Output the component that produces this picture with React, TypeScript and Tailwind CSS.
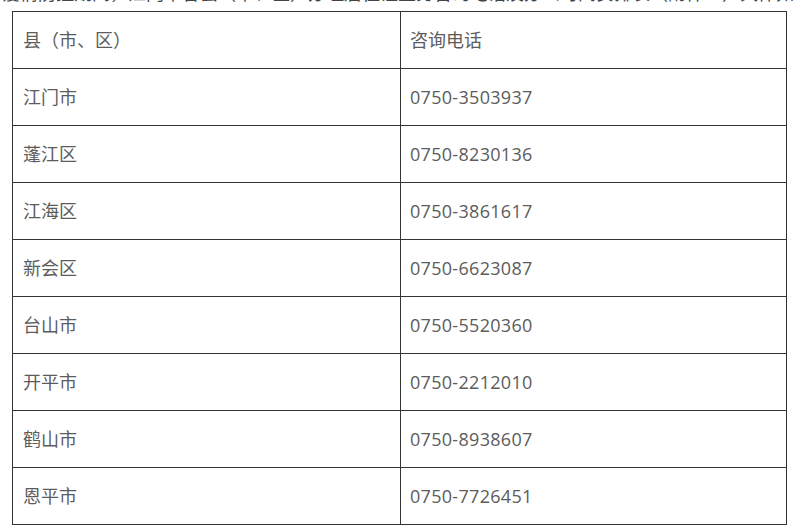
const rows: [string, string][] = [
  ["江门市", "0750-3503937"],
  ["蓬江区", "0750-8230136"],
  ["江海区", "0750-3861617"],
  ["新会区", "0750-6623087"],
  ["台山市", "0750-5520360"],
  ["开平市", "0750-2212010"],
  ["鹤山市", "0750-8938607"],
  ["恩平市", "0750-7726451"],
];

// 江门各县（市、区）咨询电话表
export default function App() {
  return (
    <div
      className="h-[529px] w-[800px] overflow-hidden bg-white text-[#5c5c5c]"
      style={{ fontFamily: '"Open Sans", "Noto Sans CJK SC", sans-serif' }}
    >
      <p className="-mt-[17px] h-[28px] whitespace-nowrap pl-[2px] text-[18px] leading-[20px] text-[#444]">
        疫情防控期间，江门市各县（市、区）办理居住证业务咨询电话及办公时间安排表（附件一）具体如下表所示：
      </p>
      <table className="ml-[12px] w-[775px] border-collapse border border-[#333] text-[18px]">
        <tbody>
          <tr className="h-[57px]">
            <td className="w-[388px] border border-[#333] pl-[10px]">县（市、区）</td>
            <td className="border border-[#333] pl-[9px]">咨询电话</td>
          </tr>
          {rows.map(([name, tel]) => (
            <tr key={name} className="h-[57px]">
              <td className="border border-[#333] pl-[10px]">{name}</td>
              <td className="border border-[#333] pl-[9px] tracking-[0.3px]">{tel}</td>
            </tr>
          ))}
        </tbody>
      </table>
    </div>
  );
}
